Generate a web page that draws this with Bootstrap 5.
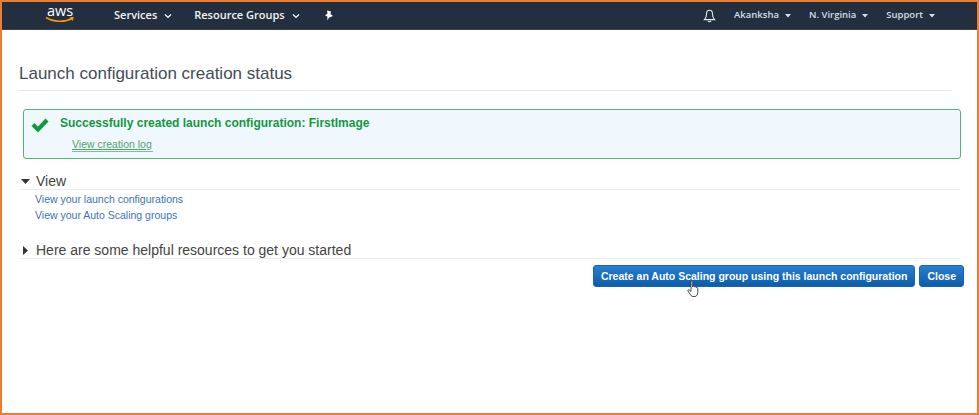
<!DOCTYPE html>
<html lang="en"><head><meta charset="utf-8">
<link href="https://cdn.jsdelivr.net/npm/bootstrap@5.3.0/dist/css/bootstrap.min.css" rel="stylesheet">
<style>
html,body{height:100%;margin:0}
body{font-family:"Liberation Sans",Arial,sans-serif;background:#fff}
.frame{height:415px;border:2px solid #ed7d31;overflow:hidden;display:flex;flex-direction:column}
.topbar{height:28px;background:#232f3e;color:#fff;flex:none;font-family:"Open Sans","DejaVu Sans",sans-serif;border-bottom:1px solid #3a4553}
.logo{margin-left:42px;width:32px;height:24px;flex:none;position:relative;display:block}
.logo-txt{font-family:"Open Sans",sans-serif;font-size:14.5px;line-height:14px;display:block;text-align:center;color:#fff}
.logo svg{display:block;margin:-2px auto 0}
.navl{font-size:11px;font-weight:600;color:#f3f4f5;white-space:nowrap}
.navr{font-size:9.5px;font-weight:600;color:#d7dfe8;white-space:nowrap}
.chev{margin-left:7px}
.body-wrap{padding:0 17px;flex:1}
.title{font-size:17px;font-weight:400;color:#444c56;margin:34px 0 0;line-height:20px;padding-bottom:6px;border-bottom:1px solid #e6e6e6;margin-right:8px}
.okbox{margin:18px -1px 0 4px;height:50px;border:1px solid #4fb878;border-radius:3px;background:#f0f8fe;padding:6px 6px 0 7px;margin-right:-1px}
.oktitle{font-size:12px;font-weight:700;color:#12993f;line-height:14px}
.oklog{font-size:10.5px;color:#54a26b;border-bottom:1px solid #7bc295;display:inline-block;line-height:13px;margin:8px 0 0 12px;padding:0 1px 0 0}
.sect{font-size:14px;color:#444;line-height:16px;border-bottom:1px solid #eee;display:flex;align-items:center}
.tri{width:15px;flex:none;display:flex;justify-content:center;margin-left:-1px;margin-right:3px}
.lnk{font-size:10.5px;color:#3b73b9;text-decoration:none;display:block;line-height:13px;margin-left:16px}
.awsbtn{font-size:10.5px;font-weight:700;color:#fff;height:22px;line-height:20px;padding:0 7px;border:1px solid #1266b5;border-radius:3px;background:linear-gradient(#2a7fd0,#0b5cab);white-space:nowrap}
.cursor{position:absolute;left:685px;top:278px}
</style></head><body>
<div class="frame position-relative">
 <nav class="topbar d-flex align-items-center">
  <span class="logo"><span class="logo-txt">aws</span>
   <svg width="30" height="7" viewBox="0 0 30 7"><path d="M1 1.5C8 6 20 6.5 27 2.5" fill="none" stroke="#f90" stroke-width="1.5"/><path d="M24.5 1.2 29 1l-1.5 4z" fill="#f90"/></svg></span>
  <span class="navl d-flex align-items-center" style="margin-left:38px">Services<svg class="chev" width="8" height="6" viewBox="0 0 8 6"><path d="M1 1.5 4 4.5 7 1.5" fill="none" stroke="#fff" stroke-width="1.2"/></svg></span>
  <span class="navl d-flex align-items-center" style="margin-left:22px">Resource Groups<svg class="chev" width="8" height="6" viewBox="0 0 8 6"><path d="M1 1.5 4 4.5 7 1.5" fill="none" stroke="#fff" stroke-width="1.2"/></svg></span>
  <svg style="margin-left:24px" width="10" height="11" viewBox="0 0 10 11"><path d="M3 .5 7 1.5 6.5 4 9 6 6.5 7 5 7.5 3.5 10.5 3.3 6.5 1 5.5 3.5 3.5z" fill="#fff"/></svg>
  <span class="ms-auto d-flex align-items-center">
   <svg width="13" height="14" viewBox="0 0 13 14"><path d="M6.5 1.2C4.3 1.2 3.5 3 3.5 5c0 3-.6 4.3-2 5.6h10C10.100 9.300 9.500 8 9.500 5c0-2-.8-3.800-3-3.800zM5 12c.3 1 2.700 1 3 0" fill="none" stroke="#e8ecf0" stroke-width="1.100"/></svg>
   <span class="navr d-flex align-items-center" style="margin-left:18px">Akanksha<svg style="margin-left:6px" width="6" height="4" viewBox="0 0 6 4"><path d="M0 0h6L3 3.500z" fill="#d7dfe8"/></svg></span>
   <span class="navr d-flex align-items-center" style="margin-left:18px">N. Virginia<svg style="margin-left:6px" width="6" height="4" viewBox="0 0 6 4"><path d="M0 0h6L3 3.500z" fill="#d7dfe8"/></svg></span>
   <span class="navr d-flex align-items-center" style="margin-left:18px;margin-right:42px">Support<svg style="margin-left:6px" width="6" height="4" viewBox="0 0 6 4"><path d="M0 0h6L3 3.500z" fill="#d7dfe8"/></svg></span>
  </span>
 </nav>
 <main class="body-wrap">
  <h1 class="title">Launch configuration creation status</h1>
  <div class="okbox d-flex">
   <svg class="flex-none" width="18" height="15" viewBox="0 0 18 15" style="margin-top:2px;flex:none"><path d="M.5 8 3.500 5 7 8.500 14.500.5 17.500 3.500 7 14.500z" fill="#12993f"/></svg>
   <div style="margin-left:11px"><div class="oktitle">Successfully created launch configuration: FirstImage</div><a class="oklog">View creation log</a></div>
  </div>
  <div class="sect" style="margin-top:14px"><span class="tri"><svg width="9" height="5" viewBox="0 0 9 5"><path d="M0 0h9L4.500 5z" fill="#333"/></svg></span>View</div>
  <div style="margin-top:3px"><a class="lnk" href="#">View your launch configurations</a><a class="lnk" href="#" style="margin-top:3px">View your Auto Scaling groups</a></div>
  <div class="sect" style="margin-top:20px"><span class="tri"><svg width="5" height="9" viewBox="0 0 5 9"><path d="M0 0v9l5-4.500z" fill="#333"/></svg></span>Here are some helpful resources to get you started</div>
  <div class="d-flex justify-content-end gap-1" style="margin-top:6px;margin-right:-4px">
   <button class="awsbtn">Create an Auto Scaling group using this launch configuration</button><button class="awsbtn">Close</button>
  </div>
 </main>
 <svg class="cursor" width="13" height="18" viewBox="0 0 13 18"><path d="M4 1.500c.8-.8 1.700-.3 1.700.7V7l.3-1c1-.5 1.500 0 1.600.8.900-.5 1.500 0 1.600.8 1-.4 1.600.2 1.600 1.200v3.500c0 2-1 4.200-3 4.200H6c-1.500 0-2-1-3-2.500L1 11c-.5-1 .5-1.700 1.300-1L4 11.500z" fill="#fff" stroke="#333" stroke-width=".9"/></svg>
</div>
<script src="https://cdn.jsdelivr.net/npm/bootstrap@5.3.0/dist/js/bootstrap.bundle.min.js"></script>
</body></html>
